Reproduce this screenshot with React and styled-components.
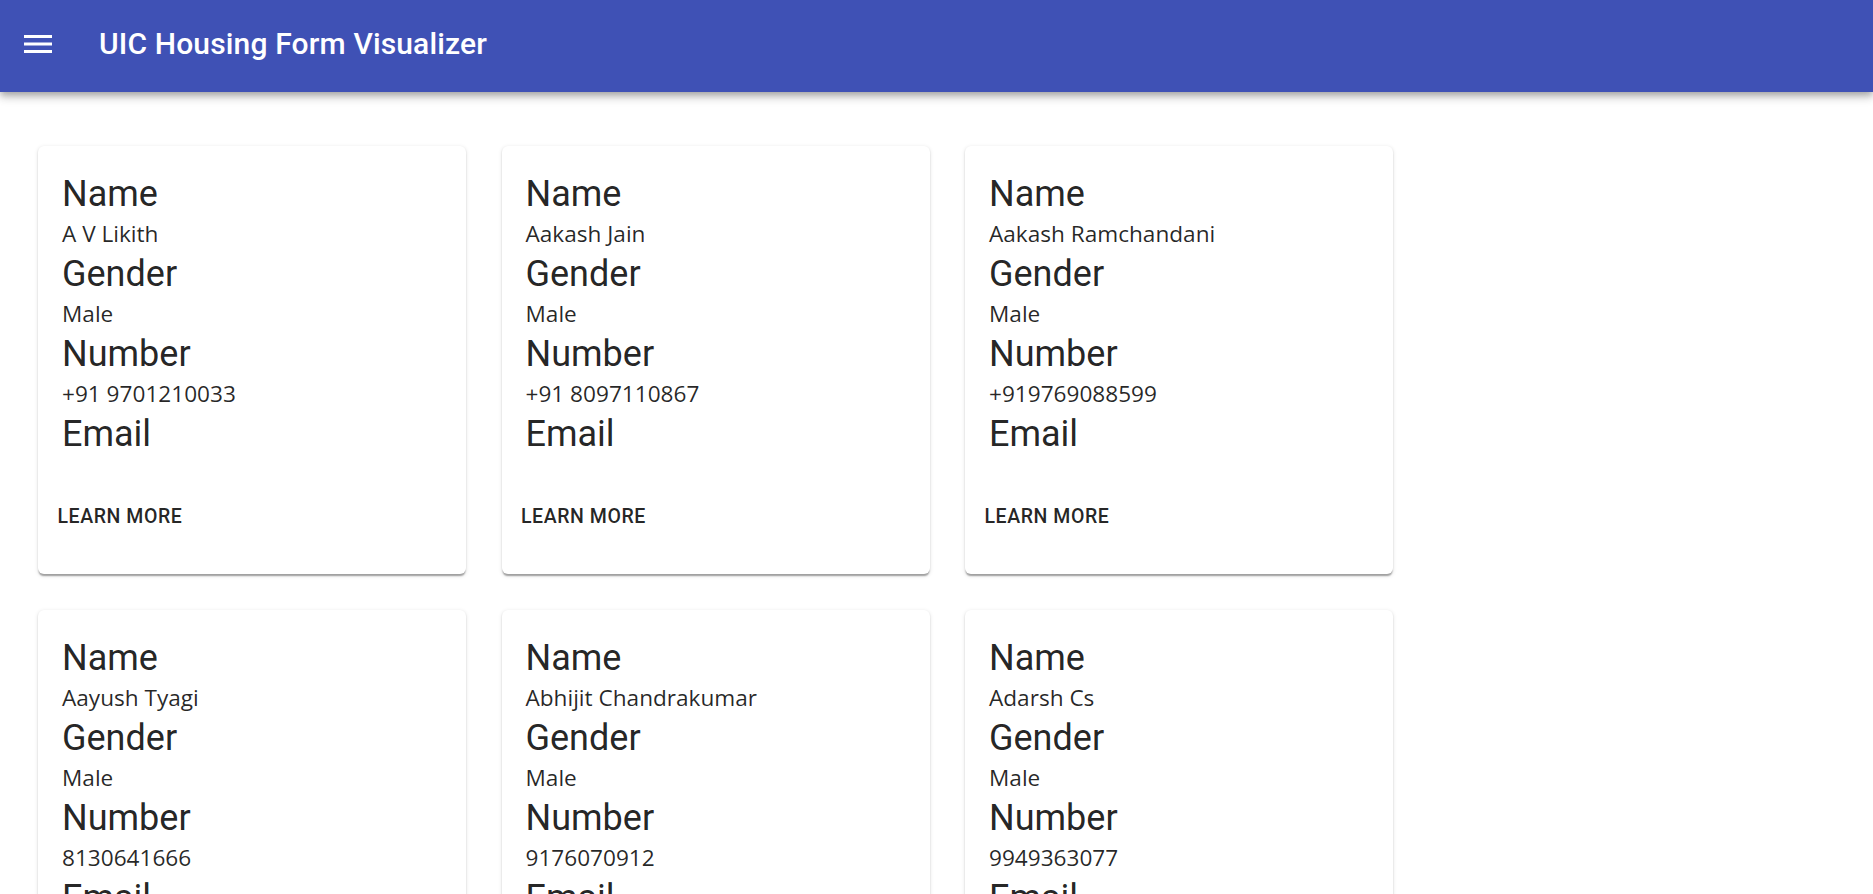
import React from 'react';
import styled, { createGlobalStyle } from 'styled-components';

const people = [
  { name: 'A V Likith', gender: 'Male', number: '+91 9701210033', email: '' },
  { name: 'Aakash Jain', gender: 'Male', number: '+91 8097110867', email: '' },
  { name: 'Aakash Ramchandani', gender: 'Male', number: '+919769088599', email: '' },
  { name: 'Aayush Tyagi', gender: 'Male', number: '8130641666', email: '' },
  { name: 'Abhijit Chandrakumar', gender: 'Male', number: '9176070912', email: '' },
  { name: 'Adarsh Cs', gender: 'Male', number: '9949363077', email: '' },
];

const MenuIcon = () => (
  <svg width="28" height="18" viewBox="0 0 28 18" fill="#fff">
    <rect x="0" y="0" width="28" height="3" />
    <rect x="0" y="7.5" width="28" height="3" />
    <rect x="0" y="15" width="28" height="3" />
  </svg>
);

const PersonCard = ({ person }) => (
  <Card>
    <CardContent>
      <Label>Name</Label>
      <Value>{person.name}</Value>
      <Label>Gender</Label>
      <Value>{person.gender}</Value>
      <Label>Number</Label>
      <Value>{person.number}</Value>
      <Label>Email</Label>
      <Value>{person.email}</Value>
    </CardContent>
    <CardActions>
      <TextButton type="button">Learn More</TextButton>
    </CardActions>
  </Card>
);

const App = () => {
  return (
    <>
      <GlobalStyle />
      <AppBar>
        <MenuButton type="button" aria-label="menu">
          <MenuIcon />
        </MenuButton>
        <Title>UIC Housing Form Visualizer</Title>
      </AppBar>
      <Main>
        <CardGrid>
          {people.map((p) => (
            <PersonCard key={p.name} person={p} />
          ))}
        </CardGrid>
      </Main>
    </>
  );
};

const GlobalStyle = createGlobalStyle`
  body {
    margin: 0;
    background: #fff;
    font-family: Roboto, "Liberation Sans", sans-serif;
    color: rgba(0, 0, 0, 0.87);
  }
`;

const AppBar = styled.header`
  position: relative;
  z-index: 2;
  height: 92px;
  box-sizing: border-box;
  padding: 0 0 4px 24px;
  display: flex;
  align-items: center;
  background-color: #3f51b5;
  color: #fff;
  box-shadow: 0px 3px 6px -1px rgba(0, 0, 0, 0.2),
    0px 6px 7.5px 0px rgba(0, 0, 0, 0.14),
    0px 1.5px 15px 0px rgba(0, 0, 0, 0.12);
`;

const MenuButton = styled.button`
  border: none;
  background: none;
  padding: 0;
  margin: 0 47px 0 0;
  display: flex;
  cursor: pointer;
`;

const Title = styled.h1`
  margin: 0;
  font-family: Roboto, "Liberation Sans", sans-serif;
  font-size: 30px;
  font-weight: 500;
  line-height: 48px;
  letter-spacing: 0.005em;
`;

const Main = styled.main`
  padding: 54px 0 40px 38px;
`;

const CardGrid = styled.div`
  display: grid;
  grid-template-columns: repeat(3, 428px);
  gap: 36px 35.5px;
`;

const Card = styled.div`
  width: 428px;
  height: 428px;
  box-sizing: border-box;
  border-radius: 6px;
  background: #fff;
  overflow: hidden;
  box-shadow: 0px 3px 1.5px -1.5px rgba(0, 0, 0, 0.2),
    0px 1.5px 1.5px 0px rgba(0, 0, 0, 0.14),
    0px 1.5px 4.5px 0px rgba(0, 0, 0, 0.12);
`;

const CardContent = styled.div`
  padding: 24px;
`;

const Label = styled.h5`
  margin: 0;
  font-family: Roboto, "Liberation Sans", sans-serif;
  font-size: 36px;
  font-weight: 400;
  line-height: 48px;
  color: rgba(0, 0, 0, 0.87);
`;

const Value = styled.p`
  margin: 0;
  font-family: "Open Sans", "Noto Sans", sans-serif;
  font-size: 22.6px;
  font-weight: 400;
  line-height: 32px;
  color: rgba(0, 0, 0, 0.85);
  &:empty {
    display: none;
  }
`;

const CardActions = styled.div`
  display: flex;
  align-items: center;
  padding: 12px;
`;

const TextButton = styled.button`
  border: none;
  background: none;
  border-radius: 6px;
  padding: 6px 7.5px;
  font-family: Roboto, "Liberation Sans", sans-serif;
  font-size: 19.5px;
  font-weight: 500;
  line-height: 1.75;
  letter-spacing: 0.02857em;
  text-transform: uppercase;
  color: rgba(0, 0, 0, 0.87);
  cursor: pointer;
`;

export default App;
